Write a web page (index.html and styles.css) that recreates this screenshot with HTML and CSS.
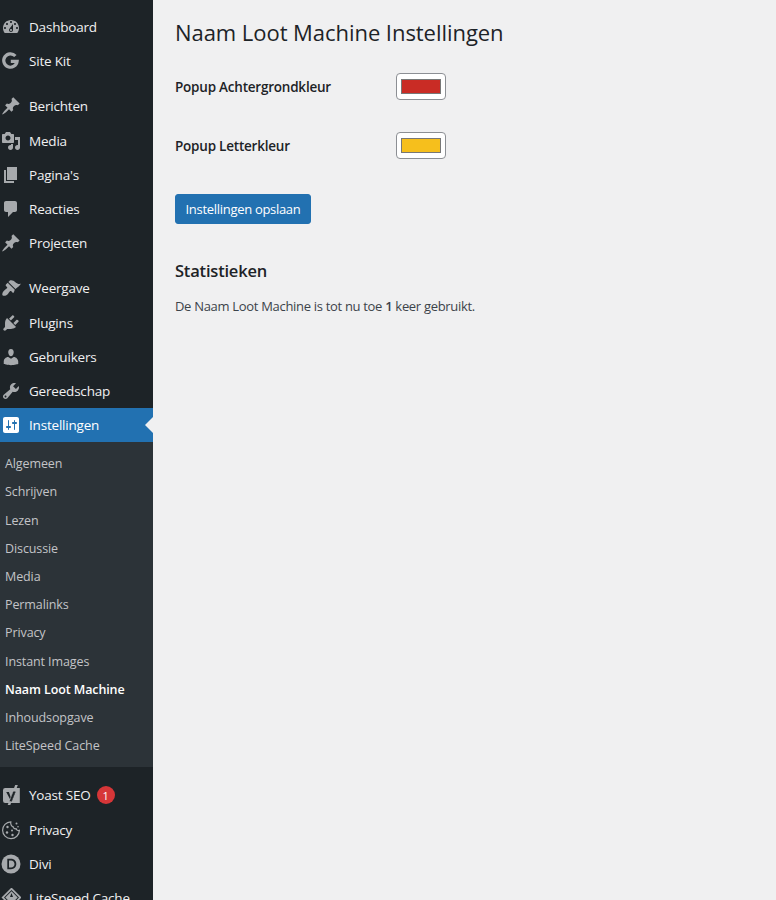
FILE: index.html
```html
<!DOCTYPE html>
<html lang="nl">
<head>
<meta charset="utf-8">
<title>Naam Loot Machine Instellingen</title>
<link rel="stylesheet" href="styles.css">
</head>
<body>
<div class="layout">
  <nav class="sidebar">
    <ul class="menu">
      <li class="item"><svg class="icon" viewBox="0 0 20 20"><path d="M3.76 16h12.48c1.1-1.37 1.76-3.11 1.76-5 0-4.42-3.58-8-8-8s-8 3.58-8 8c0 1.89.66 3.63 1.76 5zM10 4c.55 0 1 .45 1 1s-.45 1-1 1-1-.45-1-1 .45-1 1-1zM6 6c.55 0 1 .45 1 1s-.45 1-1 1-1-.45-1-1 .45-1 1-1zm8 0c.55 0 1 .45 1 1s-.45 1-1 1-1-.45-1-1 .45-1 1-1zm-5.37 5.55L12 7v6c0 1.1-.9 2-2 2s-2-.9-2-2c0-.57.24-1.08.63-1.45zM4 10c.55 0 1 .45 1 1s-.45 1-1 1-1-.45-1-1 .45-1 1-1zm12 0c.55 0 1 .45 1 1s-.45 1-1 1-1-.45-1-1 .45-1 1-1zm-5 3c0-.55-.45-1-1-1s-1 .45-1 1 .45 1 1 1 1-.45 1-1z" fill-rule="evenodd"/></svg>Dashboard</li>
      <li class="item"><svg class="icon" viewBox="0 0 20 20"><path class="stroke-g" d="M14.400 5A6.700 6.700 0 1 0 16.100 10.300H9.800"/></svg>Site Kit</li>
    </ul>
    <ul class="menu">
      <li class="item"><svg class="icon" viewBox="0 0 20 20"><path d="M10.44 3.02l1.82-1.82 6.36 6.35-1.83 1.82c-1.05-.68-2.48-.57-3.41.36l-.75.75c-.92.93-1.04 2.35-.35 3.41l-1.83 1.82-2.41-2.41-2.8 2.79c-.42.42-3.38 2.71-3.8 2.29s1.86-3.39 2.28-3.81l2.79-2.79L4.1 9.36l1.83-1.82c1.05.69 2.48.57 3.4-.36l.75-.75c.93-.92 1.05-2.35.36-3.41z"/></svg>Berichten</li>
      <li class="item"><svg class="icon" viewBox="0 0 20 20"><path fill-rule="evenodd" d="M13 11V4c0-.55-.45-1-1-1h-1.67L9 1H5L3.67 3H2c-.55 0-1 .45-1 1v7c0 .55.45 1 1 1h10c.55 0 1-.45 1-1zM7 4.500c1.38 0 2.500 1.120 2.500 2.500S8.380 9.500 7 9.500 4.500 8.380 4.500 7 5.620 4.500 7 4.500zM14 6h5v10.500c0 1.380-1.120 2.500-2.500 2.500S14 17.880 14 16.500s1.120-2.500 2.500-2.500c.17 0 .34.02.5.05V9h-3V6zm-4 8.050V13h2v3.500c0 1.380-1.120 2.500-2.500 2.500S7 17.880 7 16.500 8.120 14 9.500 14c.17 0 .34.02.5.05z"/></svg>Media</li>
      <li class="item"><svg class="icon" viewBox="0 0 20 20"><path d="M6 15V2h10v13H6zm-1 1h8v2H3V5h2v11z"/></svg>Pagina's</li>
      <li class="item"><svg class="icon" viewBox="0 0 20 20"><path d="M5 2h9c1.1 0 2 .9 2 2v7c0 1.1-.9 2-2 2h-2l-5 5v-5H5c-1.1 0-2-.9-2-2V4c0-1.1.9-2 2-2z"/></svg>Reacties</li>
      <li class="item"><svg class="icon" viewBox="0 0 20 20"><path d="M10.44 3.02l1.82-1.82 6.36 6.35-1.83 1.82c-1.05-.68-2.48-.57-3.41.36l-.75.75c-.92.93-1.04 2.35-.35 3.41l-1.83 1.82-2.41-2.41-2.8 2.79c-.42.42-3.38 2.71-3.8 2.29s1.86-3.39 2.28-3.81l2.79-2.79L4.1 9.36l1.83-1.82c1.05.69 2.48.57 3.4-.36l.75-.75c.93-.92 1.05-2.35.36-3.41z"/></svg>Projecten</li>
    </ul>
    <ul class="menu">
      <li class="item"><svg class="icon" viewBox="0 0 20 20"><path d="M14.48 11.06L7.41 3.99l1.5-1.5c.5-.56 2.3-.47 3.51.32 1.21.8 1.43 1.28 2.91 2.1 1.18.64 2.45 1.26 4.45.85-.4 1.8-3.6 3.6-5.3 5.3zm-.71.71L6.7 4.7 4.93 6.47c-.39.39-.39 1.02 0 1.41l1.06 1.06c.39.39.39 1.03 0 1.42-.6.6-1.43 1.11-2.21 1.69-.35.26-.7.53-1.01.84-1.35 1.34-1.79 3.4-1.3 4.4 1.25 1.05 3.6.6 4.95-.74.31-.32.58-.66.84-1.01.58-.78 1.09-1.61 1.69-2.21.39-.39 1.02-.39 1.41 0l1.06 1.06c.39.39 1.02.39 1.41 0z"/></svg>Weergave</li>
      <li class="item"><svg class="icon" viewBox="0 0 20 20"><path d="M13.11 4.36L9.87 7.6 8 5.73l3.24-3.24c.35-.34 1.05-.2 1.56.32.52.51.66 1.21.31 1.55zm-8 1.77l.91-1.12 9.01 9.01-1.19.84c-.71.71-2.63 1.16-3.82 1.16H6.14L4.9 17.26c-.59.59-1.54.59-2.12 0-.59-.58-.59-1.53 0-2.12l1.24-1.24v-3.88c0-1.13.4-3.19 1.09-3.89zm7.26 3.97l3.24-3.24c.34-.35 1.04-.21 1.55.31.52.51.66 1.21.31 1.55l-3.24 3.25z"/></svg>Plugins</li>
      <li class="item"><svg class="icon" viewBox="0 0 20 20"><path d="M10 9.25c-2.27 0-2.73-3.44-2.73-3.44C7 4.02 7.82 2 9.97 2c2.16 0 2.98 2.02 2.71 3.81 0 0-.41 3.44-2.68 3.44zm0 2.57L12.72 10c2.39 0 4.52 2.33 4.52 4.53v2.49s-3.65 1.13-7.24 1.13c-3.65 0-7.24-1.13-7.24-1.13v-2.49c0-2.25 1.94-4.48 4.47-4.48z"/></svg>Gebruikers</li>
      <li class="item"><svg class="icon" viewBox="0 0 20 20"><path fill-rule="evenodd" d="M16.68 9.77c-1.34 1.34-3.3 1.67-4.95.99l-5.41 6.52c-.99.99-2.59.99-3.58 0s-.99-2.59 0-3.57l6.52-5.42c-.68-1.65-.35-3.61.99-4.95 1.28-1.28 3.12-1.62 4.72-1.06l-2.89 2.89 2.82 2.82 2.86-2.87c.53 1.58.18 3.39-1.08 4.65zM3.81 16.21c.4.39 1.04.39 1.43 0 .4-.4.4-1.04 0-1.43-.39-.4-1.03-.4-1.43 0-.39.39-.39 1.03 0 1.43z"/></svg>Gereedschap</li>
      <li class="item item-active"><svg class="icon" viewBox="0 0 20 20"><path fill-rule="evenodd" d="M18 16V4c0-1.1-.9-2-2-2H4c-1.1 0-2 .9-2 2v12c0 1.1.9 2 2 2h12c1.1 0 2-.9 2-2zM8 11h1c.55 0 1 .45 1 1s-.45 1-1 1H8v1.5c0 .28-.22.5-.5.5s-.5-.22-.5-.5V13H6c-.55 0-1-.45-1-1s.45-1 1-1h1V5.5c0-.28.22-.5.5-.5s.5.22.5.5V11zm5-2h-1c-.55 0-1-.45-1-1s.45-1 1-1h1V5.5c0-.28.22-.5.5-.5s.5.22.5.5V7h1c.55 0 1 .45 1 1s-.45 1-1 1h-1v5.5c0 .28-.22.5-.5.5s-.5-.22-.5-.5V9z"/></svg>Instellingen</li>
    </ul>
    <ul class="submenu">
      <li class="subitem">Algemeen</li>
      <li class="subitem">Schrijven</li>
      <li class="subitem">Lezen</li>
      <li class="subitem">Discussie</li>
      <li class="subitem">Media</li>
      <li class="subitem">Permalinks</li>
      <li class="subitem">Privacy</li>
      <li class="subitem">Instant Images</li>
      <li class="subitem subitem-current">Naam Loot Machine</li>
      <li class="subitem">Inhoudsopgave</li>
      <li class="subitem">LiteSpeed Cache</li>
    </ul>
    <ul class="menu">
      <li class="item"><svg class="icon" viewBox="0 0 20 20"><path d="M4.200 3H18.800V18H4.200A2.200 2.200 0 0 1 2 15.800V5.200A2.200 2.200 0 0 1 4.200 3z"/><path class="icon-cut" d="M5.200 7h2.700l1.900 5.300L11.800 7h2.700l-3.900 10h-2.400l1-2.500z"/><path d="M14.200 0h2.600L9.300 20H6.700z"/><path class="icon-cut" d="M12.400 6.500h2.100l-3.900 9.800h-2z"/></svg>Yoast SEO<span class="badge">1</span></li>
      <li class="item"><svg class="icon" viewBox="0 0 20 20"><path class="stroke-thin" d="M9.800 1.800a8.400 8.400 0 1 0 8.600 8.600c-1.500.5-2.900-.2-3.300-1.700-1.600.4-3-.6-3.100-2.200-1.600-.1-2.600-2.500-2.200-4.700z"/><circle cx="6.500" cy="7" r="1.200"/><circle cx="6" cy="12.500" r="1.200"/><circle cx="11" cy="10.500" r="1"/><circle cx="11.500" cy="15" r="1.200"/><circle cx="15.500" cy="3.500" r="1"/><circle cx="17" cy="6.800" r=".8"/></svg>Privacy</li>
      <li class="item"><svg class="icon" viewBox="0 0 20 20"><circle cx="10" cy="10" r="9.500"/><path class="icon-cut" fill-rule="evenodd" d="M6.300 4.800v10.400H10c3.200 0 5.300-2.200 5.300-5.200S13.200 4.800 10 4.800zM8 6.400h2c2.100 0 3.500 1.500 3.500 3.600s-1.400 3.600-3.500 3.600H8z"/></svg>Divi</li>
      <li class="item"><svg class="icon" viewBox="0 0 20 20"><path d="M10.500-.5l10 10-10 10-10-10z"/><path class="icon-cut" fill-rule="evenodd" d="M10.500 2l7.500 7.500-7.500 7.500L3 9.500zM10.500 3.300L4.300 9.500l6.200 6.200 6.200-6.200z"/><path class="icon-cut" d="M10.500 5l1.500 4h-3z"/></svg>LiteSpeed Cache</li>
    </ul>
  </nav>
  <main class="content">
    <h1 class="title">Naam Loot Machine Instellingen</h1>
    <form class="settings">
      <div class="field">
        <label class="label">Popup Achtergrondkleur</label>
        <span class="swatch"><span class="swatch-fill fill-red"></span></span>
      </div>
      <div class="field">
        <label class="label">Popup Letterkleur</label>
        <span class="swatch"><span class="swatch-fill fill-yellow"></span></span>
      </div>
      <button type="button" class="save">Instellingen opslaan</button>
    </form>
    <h2 class="subtitle">Statistieken</h2>
    <p class="stats">De Naam Loot Machine is tot nu toe <strong>1</strong> keer gebruikt.</p>
  </main>
</div>
</body>
</html>
```
FILE: styles.css
```css
* { box-sizing: border-box; }
html, body { margin: 0; height: 100%; overflow: hidden; }
body {
  font-family: "Open Sans", "Noto Sans", sans-serif;
  font-size: 13px;
  color: #1d2327;
  background: #f0f0f1;
}
.layout { display: flex; height: 900px; }
.sidebar {
  width: 153px;
  flex: none;
  background: #1d2327;
  padding-top: 10px;
  overflow: hidden;
}
.menu, .submenu { list-style: none; margin: 0; padding: 0; }
.menu + .menu { margin-top: 11px; }
.item {
  position: relative;
  display: flex;
  align-items: center;
  height: 34.2px;
  padding-left: 1px;
  color: #f0f0f1;
  font-size: 13.5px;
  letter-spacing: -0.2px;
  white-space: nowrap;
}
.icon {
  width: 20px;
  height: 20px;
  flex: none;
  margin-right: 8px;
  fill: #a7aaad;
}
.icon-cut { fill: #1d2327; }
.stroke-g { fill: none; stroke: #a7aaad; stroke-width: 3.2; }
.stroke-thin { fill: none; stroke: #a7aaad; stroke-width: 1.2; }
.item-active { background: #2271b1; color: #fff; }
.item-active .icon { fill: #fff; }
.item-active::after {
  content: "";
  position: absolute;
  right: 0;
  top: 50%;
  margin-top: -8px;
  border: 8px solid transparent;
  border-right-color: #f0f0f1;
  border-left-width: 0;
}
.submenu {
  background: #2c3338;
  padding: 8px 0 7px;
  margin-bottom: 11px;
}
.subitem {
  height: 28.2px;
  line-height: 28px;
  padding-left: 5px;
  color: #c3c4c7;
  font-size: 12.5px;
  letter-spacing: -0.1px;
  white-space: nowrap;
}
.subitem-current { color: #fff; font-weight: 600; }
.badge {
  display: inline-flex;
  align-items: center;
  justify-content: center;
  width: 18px;
  height: 18px;
  margin-left: 6px;
  border-radius: 50%;
  background: #d63638;
  color: #fff;
  font-size: 11px;
  letter-spacing: 0;
}
.content { flex: 1; padding: 0 0 0 22px; }
.title {
  margin: 18px 0 0;
  font-size: 22px;
  line-height: 28px;
  font-weight: 400;
  letter-spacing: -0.05px;
}
.settings { display: flex; flex-direction: column; align-items: flex-start; margin-top: 27px; }
.field { display: flex; align-items: center; height: 27px; margin-bottom: 32px; }
.label { width: 221px; font-size: 13.5px; font-weight: 600; letter-spacing: -0.22px; }
.swatch {
  display: flex;
  width: 50px;
  height: 27px;
  padding: 5px 4px;
  background: #fff;
  border: 1px solid #8c8f94;
  border-radius: 4px;
}
.swatch-fill { flex: 1; border: 1px solid #777; }
.fill-red { background: #c92c25; }
.fill-yellow { background: #f6bf1c; }
.save {
  width: 136px;
  height: 30px;
  margin-top: 3px;
  padding: 0;
  background: #2271b1;
  color: #fff;
  border: 1px solid #2271b1;
  border-radius: 3px;
  font: inherit;
  letter-spacing: -0.3px;
}
.subtitle {
  margin: 36px 0 0;
  font-size: 16.5px;
  line-height: 22px;
  font-weight: 600;
  letter-spacing: -0.2px;
}
.stats { margin: 14px 0 0; line-height: 20px; letter-spacing: -0.31px; color: #3c434a; }
.stats strong { font-weight: 600; }
```
